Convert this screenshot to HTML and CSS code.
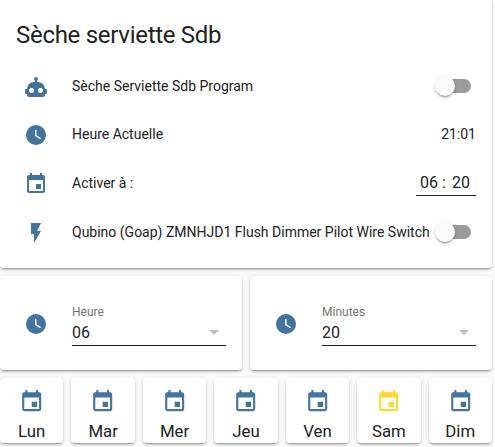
FILE: index.html
```
<!DOCTYPE html>
<html lang="fr">
<head>
<meta charset="utf-8">
<title>Sèche serviette Sdb</title>
<link rel="stylesheet" href="styles.css">
</head>
<body>
<svg class="defs" width="0" height="0">
  <symbol id="robot" viewBox="0 0 24 24"><path d="M12,2A2,2 0 0,1 14,4C14,4.74 13.6,5.39 13,5.73V7H14A7,7 0 0,1 21,14H22A1,1 0 0,1 23,15V18A1,1 0 0,1 22,19H21V20A2,2 0 0,1 19,22H5A2,2 0 0,1 3,20V19H2A1,1 0 0,1 1,18V15A1,1 0 0,1 2,14H3A7,7 0 0,1 10,7H11V5.73C10.4,5.39 10,4.74 10,4A2,2 0 0,1 12,2M7.5,13A2.5,2.5 0 0,0 5,15.5A2.5,2.5 0 0,0 7.5,18A2.5,2.5 0 0,0 10,15.5A2.5,2.5 0 0,0 7.5,13M16.5,13A2.5,2.5 0 0,0 14,15.5A2.5,2.5 0 0,0 16.5,18A2.5,2.5 0 0,0 19,15.5A2.5,2.5 0 0,0 16.5,13Z"/></symbol>
  <symbol id="clock" viewBox="0 0 24 24"><path d="M12,2A10,10 0 0,0 2,12A10,10 0 0,0 12,22A10,10 0 0,0 22,12A10,10 0 0,0 12,2M16.2,16.2L11,13V7H12.5V12.2L17,14.9L16.2,16.2Z"/></symbol>
  <symbol id="calendar" viewBox="0 0 24 24"><path d="M19,19H5V8H19M16,1V3H8V1H6V3H5C3.89,3 3,3.89 3,5V19A2,2 0 0,0 5,21H19A2,2 0 0,0 21,19V5C21,3.89 20.1,3 19,3H18V1M17,12H12V17H17V12Z"/></symbol>
  <symbol id="flash" viewBox="0 0 24 24"><path d="M7,2V13H10V22L17,10H13L17,2H7Z"/></symbol>
</svg>
<main class="stack">
  <section class="card entities">
    <h1 class="title">Sèche serviette Sdb</h1>
    <div class="row">
      <svg class="icon"><use href="#robot"/></svg>
      <span class="name">Sèche Serviette Sdb Program</span>
      <span class="toggle"><span class="knob"></span></span>
    </div>
    <div class="row">
      <svg class="icon"><use href="#clock"/></svg>
      <span class="name">Heure Actuelle</span>
      <span class="value">21:01</span>
    </div>
    <div class="row row-time">
      <svg class="icon"><use href="#calendar"/></svg>
      <span class="name">Activer à :</span>
      <span class="time"><span>06</span><span class="colon">:</span><span>20</span></span>
    </div>
    <div class="row">
      <svg class="icon"><use href="#flash"/></svg>
      <span class="name">Qubino (Goap) ZMNHJD1 Flush Dimmer Pilot Wire Switch</span>
      <span class="toggle"><span class="knob"></span></span>
    </div>
  </section>
  <div class="selects">
    <section class="card select">
      <svg class="icon"><use href="#clock"/></svg>
      <div class="field">
        <span class="label">Heure</span>
        <span class="choice">06<i class="caret"></i></span>
      </div>
    </section>
    <section class="card select">
      <svg class="icon"><use href="#clock"/></svg>
      <div class="field">
        <span class="label">Minutes</span>
        <span class="choice">20<i class="caret"></i></span>
      </div>
    </section>
  </div>
  <div class="days">
    <div class="card day"><svg class="day-icon"><use href="#calendar"/></svg><span>Lun</span></div>
    <div class="card day"><svg class="day-icon"><use href="#calendar"/></svg><span>Mar</span></div>
    <div class="card day"><svg class="day-icon"><use href="#calendar"/></svg><span>Mer</span></div>
    <div class="card day"><svg class="day-icon"><use href="#calendar"/></svg><span>Jeu</span></div>
    <div class="card day"><svg class="day-icon"><use href="#calendar"/></svg><span>Ven</span></div>
    <div class="card day"><svg class="day-icon active"><use href="#calendar"/></svg><span>Sam</span></div>
    <div class="card day"><svg class="day-icon"><use href="#calendar"/></svg><span>Dim</span></div>
  </div>
</main>
</body>
</html>
```
FILE: styles.css
```
* { box-sizing: border-box; }

body {
  margin: 0;
  min-height: 447px;
  background: #fafafa;
  color: #212121;
  font: 14px/20px Roboto, sans-serif;
}

.defs { display: block; }

.stack {
  display: flex;
  flex-direction: column;
  gap: 8px;
  width: 492px;
}

.card {
  background: #fff;
  border-radius: 4px;
  box-shadow: 0 2px 2px 0 rgba(0, 0, 0, .14), 0 1px 5px 0 rgba(0, 0, 0, .12), 0 3px 1px -2px rgba(0, 0, 0, .2);
}

.entities {
  display: flex;
  flex-direction: column;
  gap: 8px;
  height: 268px;
  padding: 11px 16px 0;
  border-radius: 0 0 4px 4px;
}

.title {
  margin: 0;
  height: 48px;
  font-size: 24px;
  font-weight: 400;
  line-height: 48px;
  letter-spacing: -.012em;
}

.row {
  display: flex;
  align-items: center;
  height: 40px;
}

.row-time { height: 42px; }

.icon {
  flex: none;
  width: 24px;
  height: 24px;
  margin: 0 24px 0 8px;
  fill: #44739e;
}

.name {
  flex: 1;
  white-space: nowrap;
  margin-top: -2px;
}

.value { margin-top: -2px; }

.toggle {
  flex: none;
  position: relative;
  width: 34px;
  height: 14px;
  margin: -2px 5px 0 0;
  border-radius: 7px;
  background: #9c9c9c;
}

.knob {
  position: absolute;
  top: -3px;
  left: -2px;
  width: 20px;
  height: 20px;
  border-radius: 50%;
  background: #fafafa;
  box-shadow: 0 3px 1px -2px rgba(0, 0, 0, .2), 0 2px 2px 0 rgba(0, 0, 0, .14), 0 1px 5px 0 rgba(0, 0, 0, .12);
}

.time {
  display: flex;
  width: 60px;
  height: 25px;
  margin-top: -1px;
  padding-left: 4px;
  border-bottom: 1px solid #212121;
  font-size: 16px;
  line-height: 23px;
}

.colon {
  width: 14px;
  padding-right: 2px;
  text-align: center;
}

.selects {
  display: grid;
  grid-template-columns: 1fr 1fr;
  gap: 8px;
}

.select {
  display: flex;
  align-items: center;
  height: 94px;
  padding: 2px 16px 0;
}

.field {
  flex: 1;
  display: flex;
  flex-direction: column;
  height: 46px;
  margin-top: 1px;
}

.label {
  color: #737373;
  font-size: 12px;
  line-height: 20px;
}

.choice {
  display: flex;
  align-items: flex-start;
  justify-content: space-between;
  height: 24px;
  padding: 1.5px 7px 0 0;
  border-bottom: 1px solid #212121;
  font-size: 16px;
}

.caret {
  margin-top: 6.5px;
  border: 5px solid transparent;
  border-top-color: #bdbdbd;
  border-bottom: 0;
}

.days {
  display: grid;
  grid-template-columns: repeat(7, 1fr);
  gap: 8px;
}

.day {
  display: flex;
  flex-direction: column;
  align-items: center;
  height: 65px;
  padding-top: 10.5px;
  font-size: 16.8px;
  line-height: 20px;
}

.day-icon {
  flex: none;
  width: 25.4px;
  height: 25.4px;
  margin-bottom: 7.5px;
  fill: #44739e;
}

.day-icon.active { fill: #fdd835; }
```
